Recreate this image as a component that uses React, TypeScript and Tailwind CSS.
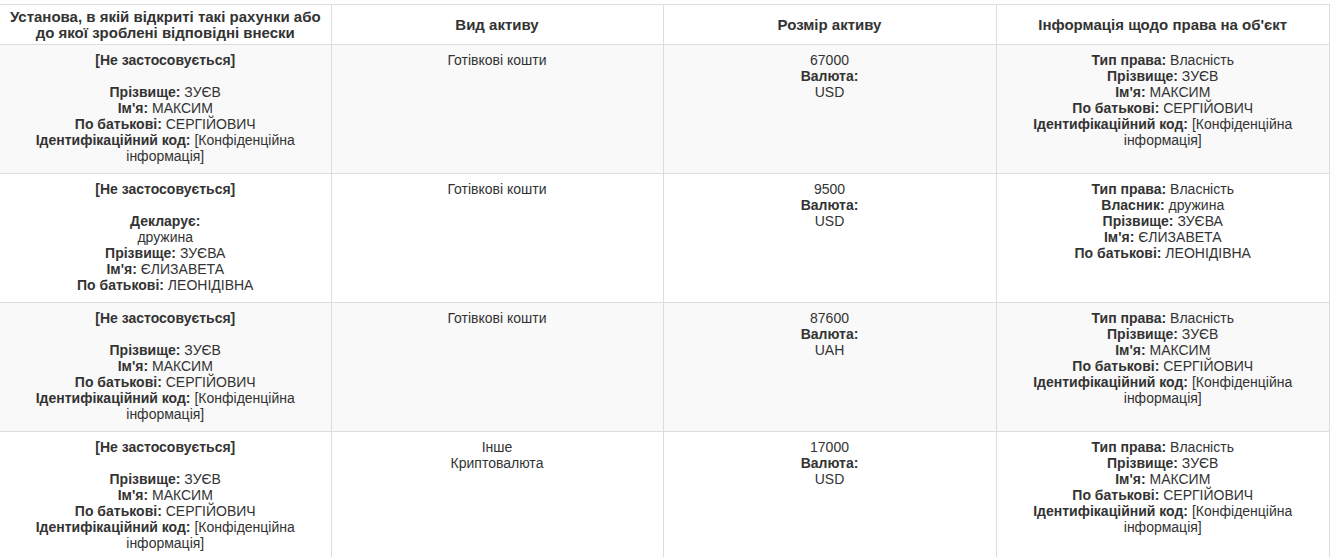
type Line = { label?: string; value?: string; blank?: boolean; plain?: string };

interface Row {
  institution: Line[];
  kind: string[];
  size: Line[];
  rights: Line[];
}

const zuev: Line[] = [
  { label: "Прізвище:", value: "ЗУЄВ" },
  { label: "Ім'я:", value: "МАКСИМ" },
  { label: "По батькові:", value: "СЕРГІЙОВИЧ" },
  { label: "Ідентифікаційний код:", value: "[Конфіденційна інформація]" },
];

const rights = (): Line[] => [{ label: "Тип права:", value: "Власність" }, ...zuev];

const rows: Row[] = [
  {
    institution: [{ label: "[Не застосовується]" }, { blank: true }, ...zuev],
    kind: ["Готівкові кошти"],
    size: [{ plain: "67000" }, { label: "Валюта:" }, { plain: "USD" }],
    rights: rights(),
  },
  {
    institution: [
      { label: "[Не застосовується]" },
      { blank: true },
      { label: "Декларує:" },
      { plain: "дружина" },
      { label: "Прізвище:", value: "ЗУЄВА" },
      { label: "Ім'я:", value: "ЄЛИЗАВЕТА" },
      { label: "По батькові:", value: "ЛЕОНІДІВНА" },
    ],
    kind: ["Готівкові кошти"],
    size: [{ plain: "9500" }, { label: "Валюта:" }, { plain: "USD" }],
    rights: [
      { label: "Тип права:", value: "Власність" },
      { label: "Власник:", value: "дружина" },
      { label: "Прізвище:", value: "ЗУЄВА" },
      { label: "Ім'я:", value: "ЄЛИЗАВЕТА" },
      { label: "По батькові:", value: "ЛЕОНІДІВНА" },
    ],
  },
  {
    institution: [{ label: "[Не застосовується]" }, { blank: true }, ...zuev],
    kind: ["Готівкові кошти"],
    size: [{ plain: "87600" }, { label: "Валюта:" }, { plain: "UAH" }],
    rights: rights(),
  },
  {
    institution: [{ label: "[Не застосовується]" }, { blank: true }, ...zuev],
    kind: ["Інше", "Криптовалюта"],
    size: [{ plain: "17000" }, { label: "Валюта:" }, { plain: "USD" }],
    rights: rights(),
  },
];

function Lines({ lines }: { lines: Line[] }) {
  return (
    <>
      {lines.map((l, i) => {
        if (l.blank) return <div key={i} className="h-4" />;
        if (l.plain) return <div key={i}>{l.plain}</div>;
        return (
          <div key={i}>
            <b className="font-bold">{l.label}</b>
            {l.value ? " " + l.value : null}
          </div>
        );
      })}
    </>
  );
}

export default function App() {
  const th =
    "border-r border-b border-[#dddddd] px-[5px] pt-1 pb-[3px] text-[15px] leading-4 font-bold align-middle text-center last:border-r-0";
  const td = "border-r border-b border-[#dddddd] px-2 pt-[7px] pb-[9px] align-top text-center last:border-r-0";
  return (
    <div className="bg-white pt-1 text-[14px] leading-4 text-[#333333]" style={{ fontFamily: '"Liberation Sans", Arial, sans-serif' }}>
      <table className="w-[1330px] table-fixed border-collapse border-t border-r border-[#dddddd]">
        <colgroup>
          <col className="w-[331px]" />
          <col className="w-[332px]" />
          <col className="w-[333px]" />
          <col />
        </colgroup>
        <thead>
          <tr>
            <th className={th}>Установа, в якій відкриті такі рахунки або до якої зроблені відповідні внески</th>
            <th className={th}>Вид активу</th>
            <th className={th}>Розмір активу</th>
            <th className={th}>Інформація щодо права на об'єкт</th>
          </tr>
        </thead>
        <tbody>
          {rows.map((r, i) => (
            <tr key={i} className={i % 2 === 0 ? "bg-[#f9f9f9]" : "bg-white"}>
              <td className={td}>
                <Lines lines={r.institution} />
              </td>
              <td className={td}>
                {r.kind.map((k) => (
                  <div key={k}>{k}</div>
                ))}
              </td>
              <td className={td}>
                <Lines lines={r.size} />
              </td>
              <td className={td}>
                <Lines lines={r.rights} />
              </td>
            </tr>
          ))}
        </tbody>
      </table>
    </div>
  );
}
